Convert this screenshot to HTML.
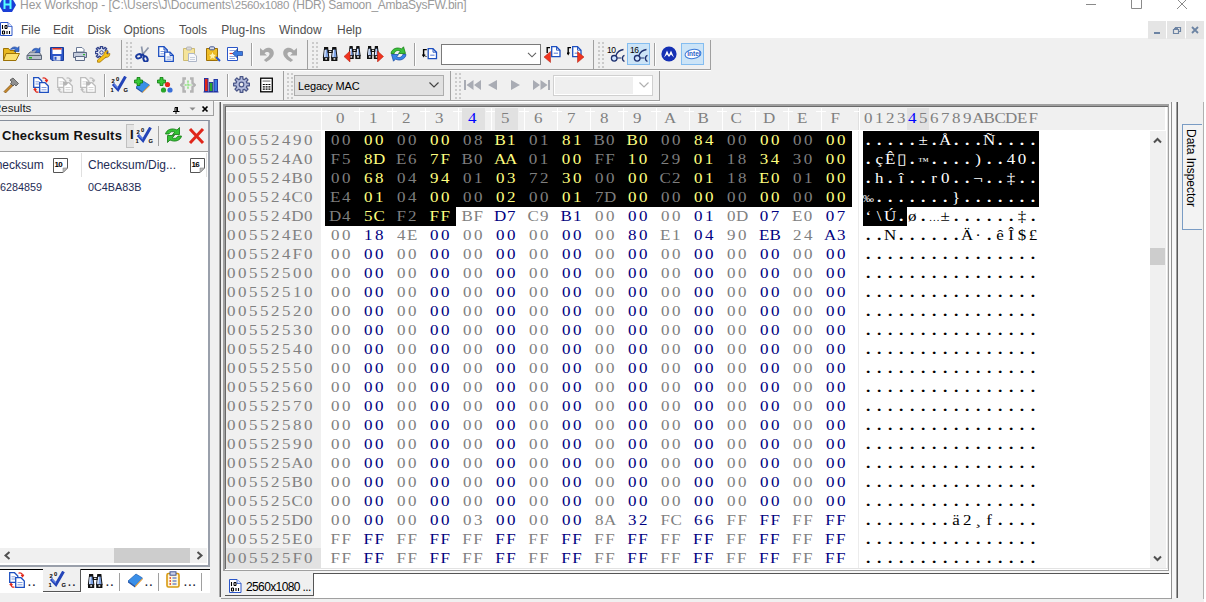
<!DOCTYPE html><html><head><meta charset="utf-8"><title>Hex Workshop</title><style>html,body{margin:0;padding:0}
body{width:1206px;height:602px;position:relative;overflow:hidden;background:#f0f0f0;font-family:"Liberation Sans",sans-serif;font-size:12px;color:#000}
div,svg.a,span.a{position:absolute;box-sizing:border-box}
.t{white-space:pre;line-height:16px}
.title{color:#9a9a9a;font-size:12px;letter-spacing:-0.05px}
.menu{color:#505050;font-size:12px}
.m{font-family:"Liberation Serif",serif;font-size:14.5px;line-height:19px;white-space:pre;letter-spacing:2.1517px;color:#808080;transform:scaleX(1.17);transform-origin:0 0}
.m b{display:inline-flex;justify-content:center;width:9.4017px;margin-left:-1.0759px;margin-right:1.0759px;letter-spacing:0;font-weight:normal}
.m b.d{font-weight:bold;font-size:15px;line-height:10px}
.m b.n{font-size:9.5px}
.m i{font-style:normal;color:#000080}
.s{color:#7f7f7f}
.s i{color:#ffff7f}
.w{color:#fff}
.k{color:#000}
</style></head><body>
<div style="left:0px;top:0px;width:1206px;height:38px;background:#fff;"></div>
<svg class="a" style="left:-1px;top:-5px;" width="18" height="18" viewBox="0 0 18 18"><path d="M4 3H13L17 10L13 17H4L0 10Z" fill="#1b3fd6"/><path d="M5.5 5V14M11.5 5V14M5.5 9.5H11.5" stroke="#5ff" stroke-width="2" fill="none"/></svg>
<div class="t title" style="left:20px;top:-3px;letter-spacing:-0.04px;">Hex Workshop - [C:\Users\J\Documents\</div>
<div class="t title" style="left:234.8px;top:-3px;font-size:11.5px;letter-spacing:-0.3px;">2560x1080</div>
<div class="t title" style="left:292.5px;top:-3px;letter-spacing:-0.26px;">(HDR) Samoon_AmbaSysFW.bin]</div>
<svg class="a" style="left:1080px;top:0" width="126" height="14" viewBox="0 0 126 14"><g stroke="#8a8a8a" stroke-width="1" fill="none"><path d="M6 4.5H16"/><path d="M51.5 -2V8.5H61.5V-2"/><path d="M97 -1L107 9M107 -1L97 9"/></g></svg>
<svg class="a" style="left:0px;top:21px;" width="13" height="16" viewBox="0 0 13 16"><path d="M0.5 1.5H8L12 5.5V14.5H0.5Z" fill="#fff" stroke="#2a55c8"/><path d="M8 1.5V5.5H12" fill="#dde6ff" stroke="#2a55c8" stroke-width=".8"/><path d="M2.5 4V8M5 4.5V7.5M7 4.5V7.5M5 4.5H7M5 7.5H7M2.5 10V13M4.5 10V13M2.5 10H4.5M2.5 13H4.5M7 10V13M9.5 10V13" stroke="#000" stroke-width="1.1" fill="none"/></svg>
<div class="t menu" style="left:21px;top:22px;">File</div>
<div class="t menu" style="left:53px;top:22px;">Edit</div>
<div class="t menu" style="left:87.4px;top:22px;">Disk</div>
<div class="t menu" style="left:123.4px;top:22px;">Options</div>
<div class="t menu" style="left:179px;top:22px;">Tools</div>
<div class="t menu" style="left:221.2px;top:22px;">Plug-Ins</div>
<div class="t menu" style="left:279px;top:22px;">Window</div>
<div class="t menu" style="left:337px;top:22px;">Help</div>
<div style="left:1148px;top:21px;width:18px;height:18px;background:#e5e5e5;"></div>
<div style="left:1167px;top:21px;width:18px;height:18px;background:#e5e5e5;"></div>
<div style="left:1186px;top:21px;width:18px;height:18px;background:#e5e5e5;"></div>
<svg class="a" style="left:1148px;top:21px" width="56" height="18" viewBox="0 0 56 18"><g stroke="#6d84a3" fill="none"><path d="M6 12H12" stroke-width="2"/><path d="M25.5 8.5H30.5V12.5H25.5Z M27.5 8V6.5H32.5V10.5H31" stroke-width="1.2"/><path d="M26 8H30" stroke-width="2"/><path d="M44 6L50 12M50 6L44 12" stroke-width="1.8"/></g></svg>
<svg class="a" style="left:3px;top:46px;" width="17" height="16" viewBox="0 0 17 16"><path d="M0.500 2.500H5.500L7 4.500H12.500V14.500H0.500Z" fill="#e8b820" stroke="#9c7206"/><path d="M3 7.500H16.500L13 14.500H0.500Z" fill="#fbe070" stroke="#9c7206"/><path d="M7.500 3.500C8.500 1 12 0 14.500 2L16 0.500V5.500H11L12.800 3.700C11.500 2.700 9.500 2.800 7.500 3.500Z" fill="#3a6fd0" stroke="#1d3f96" stroke-width=".600"/></svg>
<svg class="a" style="left:26px;top:46px;" width="16" height="16" viewBox="0 0 16 16"><path d="M1 9.5L4 6H13L15.5 9.5V13.5H1Z" fill="#b9c0cc" stroke="#5d6778"/><path d="M1 9.5H15.5" stroke="#5d6778"/><rect x="3" y="11" width="3" height="1.5" fill="#2db52d"/><path d="M6 5C7 2.5 10 1.5 12.5 3L14 1.5V6.5H9L10.8 4.7C9.5 4 8 4.2 6 5Z" fill="#3a6fd0" stroke="#1d3f96" stroke-width=".6"/></svg>
<svg class="a" style="left:49px;top:46px;" width="16" height="16" viewBox="0 0 16 16"><path d="M1.5 1.5H14.5V14.5H3L1.5 13Z" fill="#2a55c8" stroke="#173a9a"/><rect x="3.5" y="2" width="9" height="6" fill="#fff"/><rect x="3.5" y="2" width="9" height="1.6" fill="#e03a2a"/><rect x="4.5" y="10" width="7" height="4.5" fill="#dfe6f5"/><rect x="5.5" y="10.8" width="2" height="3" fill="#2a55c8"/></svg>
<svg class="a" style="left:72px;top:46px;" width="16" height="16" viewBox="0 0 16 16"><path d="M4.5 6V1.5H10L12 3.5V6Z" fill="#fff" stroke="#6b7a96"/><path d="M1.5 6.5H14.5V11.5H1.5Z" fill="#c3cbdb" stroke="#5d6a86"/><path d="M3.5 10.5H12.5V14.5H3.5Z" fill="#eef1f7" stroke="#5d6a86"/><rect x="11" y="8" width="2" height="1.2" fill="#2db52d"/></svg>
<svg class="a" style="left:95px;top:46px;" width="16" height="17" viewBox="0 0 16 17"><path d="M10.66 5.40L12.71 5.47L12.71 7.53L10.66 7.60L10.22 8.66L11.63 10.16L10.16 11.63L8.66 10.22L7.60 10.66L7.53 12.71L5.47 12.71L5.40 10.66L4.34 10.22L2.84 11.63L1.37 10.16L2.78 8.66L2.34 7.60L0.29 7.53L0.29 5.47L2.34 5.40L2.78 4.34L1.37 2.84L2.84 1.37L4.34 2.78L5.40 2.34L5.47 0.29L7.53 0.29L7.60 2.34L8.66 2.78L10.16 1.37L11.63 2.84L10.22 4.34Z" fill="#e4e9f6" stroke="#34448c" stroke-width="1.400" stroke-linejoin="round"/><circle cx="6.500" cy="6.500" r="1.700" fill="#f0f0f0" stroke="#34448c" stroke-width="1"/><path d="M2.500 14L9 8.500C8.600 6.200 10.500 4.400 13 4.800L11.200 6.800L12.300 8.200L14.800 7.400C15.200 10 13 11.800 10.800 11.200L5 16.200H2.500Z" fill="#f6c21a" stroke="#a8780a" stroke-width=".800"/></svg>
<div style="left:0px;top:69px;width:122px;height:1px;background:#a0a0a0;"></div>
<div style="left:0px;top:70px;width:122px;height:1px;background:#fff;"></div>
<div style="left:121px;top:40px;width:1px;height:29px;background:#a0a0a0;"></div>
<div style="left:126px;top:42px;width:7px;height:26px;background-image:radial-gradient(circle at 1px 1px,#cbcbcb 0.8px,transparent 1.1px);background-size:4px 4px;"></div>
<svg class="a" style="left:135px;top:46px;" width="16" height="16" viewBox="0 0 16 16"><path d="M6.500 0.500L8 9M13.500 1.500L6 10.500" stroke="#8d97ab" stroke-width="1.700" fill="none"/><ellipse cx="3.800" cy="10.300" rx="2.700" ry="2" fill="none" stroke="#1a3a9e" stroke-width="2" transform="rotate(-20 3.800 10.300)"/><ellipse cx="10.500" cy="13" rx="2" ry="2.700" fill="none" stroke="#1a3a9e" stroke-width="2" transform="rotate(-20 10.500 13)"/><path d="M5.500 9L8 8.500L9.500 10.500" stroke="#1a3a9e" stroke-width="2" fill="none"/></svg>
<svg class="a" style="left:158px;top:46px;" width="16" height="16" viewBox="0 0 16 16"><path d="M0.700 0.700H6L9.300 4V10.300H0.700Z" fill="#fff" stroke="#1d4fc0" stroke-width="1.300"/><path d="M6 0.700V4H9.300" fill="none" stroke="#1d4fc0" stroke-width="1"/><path d="M2.500 5.500H7.500M2.500 7.800H7.500" stroke="#7f9ce0" stroke-width="1"/><path d="M6.700 6.200H12L15.300 9.500V15.300H6.700Z" fill="#fff" stroke="#1d4fc0" stroke-width="1.300"/><path d="M12 6.200V9.500H15.300" fill="none" stroke="#1d4fc0" stroke-width="1"/><path d="M8.500 11H13.500M8.500 13.200H13.500" stroke="#7f9ce0" stroke-width="1"/></svg>
<svg class="a" style="left:182px;top:46px;" width="16" height="16" viewBox="0 0 16 16"><path d="M1.5 2.5H12.5V14.5H1.5Z" fill="#f5e49a" stroke="#cdbb72"/><rect x="4.5" y="1" width="5" height="3" rx="1" fill="#d9d9d9" stroke="#a9a9a9" stroke-width=".8"/><path d="M6.5 7.5H12L14.5 10V15.5H6.5Z" fill="#f7f8fb" stroke="#aeb7c8"/><path d="M8 11.5H13M8 13.5H13" stroke="#c2c9d8" stroke-width=".9"/></svg>
<svg class="a" style="left:205px;top:46px;" width="16" height="16" viewBox="0 0 16 16"><path d="M1.5 2.5H12.5V14.5H1.5Z" fill="#f0bf28" stroke="#9c6f07"/><rect x="4.5" y="0.8" width="5" height="3" rx="1" fill="#d6dbe6" stroke="#34498a" stroke-width=".9"/><path d="M7.5 5L8.8 8.2L12 8.5L9.6 10.6L10.4 14L7.5 12.2L4.6 14L5.4 10.6L3 8.5L6.2 8.2Z" fill="#fff3b0" stroke="#e0a400" stroke-width=".6"/><path d="M11 11L15 15" stroke="#2a55c8" stroke-width="2"/></svg>
<svg class="a" style="left:227px;top:46px;" width="16" height="16" viewBox="0 0 16 16"><path d="M0.5 1.5H10.5V14.5H0.5Z" fill="#fff" stroke="#2a55c8"/><path d="M2.5 4.5H8M2.5 10.5H8M2.5 12.5H8" stroke="#7f9ce0" stroke-width=".9"/><path d="M2.5 7.5H6" stroke="#e03a2a" stroke-width="1.2"/><path d="M15.5 5.5V9.5H10.5V12L5.5 7.5L10.5 3V5.5Z" fill="#3a7be0" stroke="#1d3f96" stroke-width=".7"/></svg>
<div style="left:251px;top:43px;width:1px;height:23px;background:#a0a0a0;"></div>
<div style="left:252px;top:43px;width:1px;height:23px;background:#fff;"></div>
<svg class="a" style="left:259px;top:46px;" width="16" height="16" viewBox="0 0 16 16"><path d="M1 2V9.500H8L5.500 7.300C7 5.600 10 5.600 10.500 7.600C11 9.600 8 12 4.800 14L7.300 16C11 13.600 14.800 11 14.800 7C14.800 2.800 10 0.800 6.500 2.400C5.500 2.900 4.600 3.600 4 4.400Z" fill="#a8a8a8"/></svg>
<svg class="a" style="left:282px;top:46px;" width="16" height="16" viewBox="0 0 16 16"><path d="M15 2V9.500H8L10.500 7.300C9 5.600 6 5.600 5.500 7.600C5 9.600 8 12 11.200 14L8.700 16C5 13.600 1.200 11 1.200 7C1.200 2.800 6 0.800 9.500 2.400C10.500 2.900 11.400 3.600 12 4.400Z" fill="#a8a8a8"/></svg>
<div style="left:122px;top:69px;width:186px;height:1px;background:#a0a0a0;"></div>
<div style="left:122px;top:70px;width:186px;height:1px;background:#fff;"></div>
<div style="left:307px;top:40px;width:1px;height:29px;background:#a0a0a0;"></div>
<div style="left:312px;top:42px;width:7px;height:26px;background-image:radial-gradient(circle at 1px 1px,#cbcbcb 0.8px,transparent 1.1px);background-size:4px 4px;"></div>
<svg class="a" style="left:322px;top:46px;" width="16" height="16" viewBox="0 0 16 16"><path d="M2.5 2.5H5.7L6.9 12H1.3Z" fill="#7fa4e6" stroke="#111" stroke-width="1"/><path d="M3.2 4L2.8 11" stroke="#e8f1ff" stroke-width="1.2"/><rect x="2.0" y="1" width="4.2" height="2.6" fill="#111"/><rect x="1.0" y="11.4" width="6.2" height="3.6" fill="#111"/><rect x="3.3" y="12.2" width="1.8" height="1.4" fill="#fff"/><path d="M10.7 2.5H13.899999999999999L15.099999999999998 12H9.5Z" fill="#7fa4e6" stroke="#111" stroke-width="1"/><path d="M11.399999999999999 4L11.0 11" stroke="#e8f1ff" stroke-width="1.2"/><rect x="10.2" y="1" width="4.2" height="2.6" fill="#111"/><rect x="9.2" y="11.4" width="6.2" height="3.6" fill="#111"/><rect x="11.499999999999998" y="12.2" width="1.8" height="1.4" fill="#fff"/><rect x="5.7" y="4" width="5" height="3" fill="#111"/><rect x="7.0" y="4.8" width="2.4" height="1.2" fill="#ddd"/></svg>
<svg class="a" style="left:344px;top:46px;" width="17" height="16" viewBox="0 0 17 16"><path d="M6.0 1.5H8.2L9.399999999999999 10H4.8Z" fill="#7fa4e6" stroke="#111" stroke-width="1"/><path d="M6.7 3L6.3 9" stroke="#e8f1ff" stroke-width="1.2"/><rect x="5.5" y="0" width="3.2" height="2.6" fill="#111"/><rect x="4.5" y="9.4" width="5.2" height="3.6" fill="#111"/><rect x="6.3" y="10.2" width="1.8" height="1.4" fill="#fff"/><path d="M12.8 1.5H15.0L16.2 10H11.600000000000001Z" fill="#7fa4e6" stroke="#111" stroke-width="1"/><path d="M13.5 3L13.100000000000001 9" stroke="#e8f1ff" stroke-width="1.2"/><rect x="12.3" y="0" width="3.2" height="2.6" fill="#111"/><rect x="11.3" y="9.4" width="5.2" height="3.6" fill="#111"/><rect x="13.1" y="10.2" width="1.8" height="1.4" fill="#fff"/><rect x="8.2" y="3" width="4.6" height="3" fill="#111"/><rect x="9.5" y="3.8" width="2.0" height="1.2" fill="#ddd"/><path d="M0 10.5L6 5V16Z" fill="#f0341f" stroke="#b01a0a" stroke-width=".5"/></svg>
<svg class="a" style="left:367px;top:46px;" width="17" height="16" viewBox="0 0 17 16"><path d="M1.5 1.5H3.7L4.9 10H0.3Z" fill="#7fa4e6" stroke="#111" stroke-width="1"/><path d="M2.2 3L1.8 9" stroke="#e8f1ff" stroke-width="1.2"/><rect x="1.0" y="0" width="3.2" height="2.6" fill="#111"/><rect x="0.0" y="9.4" width="5.2" height="3.6" fill="#111"/><rect x="1.8" y="10.2" width="1.8" height="1.4" fill="#fff"/><path d="M8.3 1.5H10.5L11.7 10H7.1000000000000005Z" fill="#7fa4e6" stroke="#111" stroke-width="1"/><path d="M9.0 3L8.600000000000001 9" stroke="#e8f1ff" stroke-width="1.2"/><rect x="7.800000000000001" y="0" width="3.2" height="2.6" fill="#111"/><rect x="6.800000000000001" y="9.4" width="5.2" height="3.6" fill="#111"/><rect x="8.6" y="10.2" width="1.8" height="1.4" fill="#fff"/><rect x="3.7" y="3" width="4.6" height="3" fill="#111"/><rect x="5.0" y="3.8" width="2.0" height="1.2" fill="#ddd"/><path d="M16.5 10.500L10.5 5V16Z" fill="#f0341f" stroke="#b01a0a" stroke-width=".5"/></svg>
<svg class="a" style="left:390px;top:46px;" width="17" height="16" viewBox="0 0 17 16"><path d="M1 7.500C1.500 3 7 0.5 11.500 3L13.500 0.800L15.500 7.500H8.500L10.300 5.200C8 3.800 5 4.500 4.200 7.500Z" fill="#3cc23c" stroke="#168016" stroke-width=".8"/><path d="M16 8.500C15.500 13 10 15.500 5.500 13L3.500 15.200L1.500 8.500H8.500L6.700 10.800C9 12.200 12 11.500 12.800 8.500Z" fill="#3a86e8" stroke="#1d4fa8" stroke-width=".8"/></svg>
<div style="left:414px;top:43px;width:1px;height:23px;background:#a0a0a0;"></div>
<div style="left:415px;top:43px;width:1px;height:23px;background:#fff;"></div>
<svg class="a" style="left:422px;top:46px;" width="16" height="16" viewBox="0 0 16 16"><path d="M6.2 2.7H11.0L14.5 6.2V12.7H6.2Z" fill="#fff" stroke="#1d4fc0" stroke-width="1.300"/><path d="M11.0 2.7V6.2H14.5" fill="none" stroke="#1d4fc0" stroke-width=".900"/><path d="M8.2 9.2H12.5" stroke="#6f90e0" stroke-width="1.200"/><path d="M4.800 3.600H1.600V10" stroke="#000" stroke-width="1.400" fill="none"/><path d="M-0.300 8.500L1.600 11.500L3.500 8.500Z" fill="#000"/><path d="M3 9.500L4.500 11" stroke="#000" stroke-width="1"/></svg>
<div style="left:441px;top:44px;width:100px;height:21px;background:#fff;border:1px solid #7a7a7a;"></div>
<svg class="a" style="left:526px;top:51px" width="12" height="8" viewBox="0 0 12 8"><path d="M2 1.800L6 5.800L10 1.800" stroke="#606060" stroke-width="1.100" fill="none"/></svg>
<svg class="a" style="left:544px;top:46px;" width="17" height="17" viewBox="0 0 17 17"><path d="M7.7 0.7H12.5L16.0 4.2V10.7H7.7Z" fill="#fff" stroke="#1d4fc0" stroke-width="1.300"/><path d="M12.5 0.7V4.2H16.0" fill="none" stroke="#1d4fc0" stroke-width=".900"/><path d="M9.7 7.199999999999999H14.0" stroke="#6f90e0" stroke-width="1.200"/><path d="M6 1.600H3.200V7" stroke="#000" stroke-width="1.400" fill="none"/><path d="M0 11L6.500 5.500V16.500Z" fill="#f0341f" stroke="#b01a0a" stroke-width=".500"/></svg>
<svg class="a" style="left:566.5px;top:46px;" width="18" height="17" viewBox="0 0 18 17"><path d="M5.7 0.7H10.5L14.0 4.2V10.7H5.7Z" fill="#fff" stroke="#1d4fc0" stroke-width="1.300"/><path d="M10.5 0.7V4.2H14.0" fill="none" stroke="#1d4fc0" stroke-width=".900"/><path d="M7.7 7.199999999999999H12.0" stroke="#6f90e0" stroke-width="1.200"/><path d="M4 1.600H1.200V8" stroke="#000" stroke-width="1.400" fill="none"/><path d="M-0.500 6.500L1.200 9.500L3 6.500Z" fill="#000"/><path d="M17 11L10.500 5.500V16.500Z" fill="#f0341f" stroke="#b01a0a" stroke-width=".500"/></svg>
<div style="left:308px;top:69px;width:286px;height:1px;background:#a0a0a0;"></div>
<div style="left:308px;top:70px;width:286px;height:1px;background:#fff;"></div>
<div style="left:593px;top:40px;width:1px;height:29px;background:#a0a0a0;"></div>
<div style="left:598px;top:42px;width:7px;height:26px;background-image:radial-gradient(circle at 1px 1px,#cbcbcb 0.8px,transparent 1.1px);background-size:4px 4px;"></div>
<svg class="a" style="left:607px;top:45px;" width="18" height="18" viewBox="0 0 18 18"><text x="0" y="7.500" font-family="Liberation Sans,sans-serif" font-size="8.500" fill="#000" letter-spacing="-0.600">10</text><circle cx="7.200" cy="13.300" r="2.800" fill="#cfe4ff" stroke="#1d2f6e" stroke-width="1.300"/><path d="M8.800 10.800C10 7.500 13 5 16.500 4.500M17.500 10.300C14.800 10.800 14.800 15.800 17.500 16.300" stroke="#1d2f6e" stroke-width="1.300" fill="none"/><path d="M10 13H14.500" stroke="#1d2f6e" stroke-width="1"/></svg>
<div style="left:627px;top:43px;width:23px;height:22px;background:#cce4f7;border:1px solid #84bdf0;"></div>
<svg class="a" style="left:630px;top:45px;" width="18" height="18" viewBox="0 0 18 18"><text x="0" y="7.500" font-family="Liberation Sans,sans-serif" font-size="8.500" fill="#000" letter-spacing="-0.600">16</text><circle cx="7.200" cy="13.300" r="2.800" fill="#cfe4ff" stroke="#1d2f6e" stroke-width="1.300"/><path d="M8.800 10.800C10 7.500 13 5 16.500 4.500M17.500 10.300C14.800 10.800 14.800 15.800 17.500 16.300" stroke="#1d2f6e" stroke-width="1.300" fill="none"/><path d="M10 13H14.500" stroke="#1d2f6e" stroke-width="1"/></svg>
<div style="left:654px;top:43px;width:1px;height:23px;background:#a0a0a0;"></div>
<div style="left:655px;top:43px;width:1px;height:23px;background:#fff;"></div>
<svg class="a" style="left:661px;top:46px;" width="16" height="16" viewBox="0 0 16 16"><circle cx="8" cy="8" r="7.6" fill="#1530b4"/><path d="M3 11.5L6 4.5L8 9L10 4.5L13 11.5L10 8.5L8 11L6 8.5Z" fill="#fff"/></svg>
<div style="left:681px;top:43px;width:23px;height:22px;background:#cce4f7;border:1px solid #84bdf0;"></div>
<svg class="a" style="left:684px;top:46px;" width="18" height="16" viewBox="0 0 18 16"><ellipse cx="9" cy="8" rx="8" ry="4.6" fill="#fff" stroke="#3a78d8" stroke-width="1" transform="rotate(-8 9 8)"/><text x="3.2" y="10.3" font-family="Liberation Sans,sans-serif" font-size="6.5" fill="#2a60c8" font-weight="bold">intel</text></svg>
<div style="left:594px;top:69px;width:117px;height:1px;background:#a0a0a0;"></div>
<div style="left:594px;top:70px;width:117px;height:1px;background:#fff;"></div>
<div style="left:710px;top:40px;width:1px;height:29px;background:#a0a0a0;"></div>
<svg class="a" style="left:3px;top:77px;" width="16" height="16" viewBox="0 0 16 16"><path d="M1 14.5L9 6.5L10.5 8L2.5 16Z" fill="#c98a2c" stroke="#7a4a0a" stroke-width=".7"/><path d="M7 3L10 1L15.5 6.5L13 9L11.5 7.5L10 9L7.5 6.5L9 5Z" fill="#8f8f8f" stroke="#444" stroke-width=".7"/></svg>
<div style="left:27px;top:74px;width:1px;height:23px;background:#a0a0a0;"></div>
<div style="left:28px;top:74px;width:1px;height:23px;background:#fff;"></div>
<svg class="a" style="left:33px;top:77px;" width="16" height="16" viewBox="0 0 16 16"><path d="M0.700 0.700H5.500L8.800 4V10.300H0.700Z" fill="#fff" stroke="#1d4fc0" stroke-width="1.300"/><path d="M2.500 4.800H6.500M2.500 7H6.500" stroke="#7f9ce0" stroke-width="1"/><path d="M6.700 5.700H12L15.300 9V15.300H6.700Z" fill="#fff" stroke="#1d4fc0" stroke-width="1.300"/><path d="M8.500 10.500H13.500M8.500 12.800H13.500" stroke="#7f9ce0" stroke-width="1"/><path d="M9.500 1.200C11.500 0.400 13.500 1.500 13.500 3.500M12.200 2.800L13.600 4.600L14.800 2.600M5.500 15C3.500 15.600 2 14.500 2 12.500M0.800 13.200L2 11.500L3.500 13.200" stroke="#e0261a" stroke-width="1.200" fill="none"/></svg>
<svg class="a" style="left:57px;top:77px;" width="16" height="16" viewBox="0 0 16 16"><path d="M0.700 0.700H5.500L8.800 4V10.300H0.700Z" fill="#fff" stroke="#bdbdbd" stroke-width="1.300"/><path d="M2.500 4.800H6.500M2.500 7H6.500" stroke="#d4d4d4" stroke-width="1"/><path d="M6.700 5.700H12L15.300 9V15.300H6.700Z" fill="#fff" stroke="#bdbdbd" stroke-width="1.300"/><path d="M8.500 10.500H13.500M8.500 12.800H13.500" stroke="#d4d4d4" stroke-width="1"/><path d="M9.500 1.200C11.500 0.400 13.500 1.500 13.500 3.500M12.200 2.800L13.600 4.600L14.800 2.600M5.500 15C3.500 15.600 2 14.500 2 12.500M0.800 13.200L2 11.500L3.500 13.200" stroke="#bdbdbd" stroke-width="1.200" fill="none"/><path d="M6 4.500L9 4.500L11 6.500L9 8.500H6.700Z" fill="#b4b4b4"/></svg>
<svg class="a" style="left:80px;top:77px;" width="16" height="16" viewBox="0 0 16 16"><path d="M0.700 0.700H5.500L8.800 4V10.300H0.700Z" fill="#fff" stroke="#bdbdbd" stroke-width="1.300"/><path d="M2.500 4.800H6.500M2.500 7H6.500" stroke="#d4d4d4" stroke-width="1"/><path d="M6.700 5.700H12L15.300 9V15.300H6.700Z" fill="#fff" stroke="#bdbdbd" stroke-width="1.300"/><path d="M8.500 10.500H13.500M8.500 12.800H13.500" stroke="#d4d4d4" stroke-width="1"/><path d="M9.500 1.200C11.500 0.400 13.500 1.500 13.500 3.500M12.200 2.800L13.600 4.600L14.800 2.600M5.500 15C3.500 15.600 2 14.500 2 12.500M0.800 13.200L2 11.500L3.500 13.200" stroke="#bdbdbd" stroke-width="1.200" fill="none"/><path d="M6 4.500L9 4.500L11 6.500L9 8.500H6.700Z" fill="#b4b4b4"/></svg>
<div style="left:104px;top:74px;width:1px;height:23px;background:#a0a0a0;"></div>
<div style="left:105px;top:74px;width:1px;height:23px;background:#fff;"></div>
<svg class="a" style="left:110px;top:76px;" width="19" height="17" viewBox="0 0 19 17"><path d="M3 8L8 13.500L15.500 0.500" stroke="#2444b8" stroke-width="3" fill="none" stroke-linejoin="miter"/><path d="M4 8.500L7.800 12" stroke="#5f83e8" stroke-width="1.200"/><text x="1.500" y="6.500" font-family="Liberation Sans,sans-serif" font-size="5.800" font-weight="bold" fill="#000">2</text><text x="6" y="4.500" font-family="Liberation Sans,sans-serif" font-size="5.800" font-weight="bold" fill="#000">0</text><text x="0.500" y="16" font-family="Liberation Sans,sans-serif" font-size="5.800" font-weight="bold" fill="#000">1</text><text x="13.500" y="16" font-family="Liberation Sans,sans-serif" font-size="5.800" font-weight="bold" fill="#000">G</text></svg>
<svg class="a" style="left:134px;top:77px;" width="16" height="16" viewBox="0 0 16 16"><path d="M2 10L9 4L15.5 8L8.5 15Z" fill="#3a8fe8" stroke="#1d5fb0" stroke-width=".7"/><path d="M2 10L8.5 15L8.5 16L2 11.5Z" fill="#1d4fa8"/><path d="M8.5 15L15.5 8V9.3L8.5 16Z" fill="#e8a03a"/><path d="M3 0.5H6V3H8.5V6H6V8.5H3V6H0.5V3H3Z" fill="#38c838" stroke="#0d7a0d" stroke-width=".8"/></svg>
<svg class="a" style="left:157px;top:77px;" width="16" height="16" viewBox="0 0 16 16"><path d="M3 0.5H6V3H8.5V6H6V8.5H3V6H0.5V3H3Z" fill="#38c838" stroke="#0d7a0d" stroke-width=".8"/><circle cx="10.5" cy="7.5" r="2.6" fill="#e8291c"/><circle cx="6.5" cy="13" r="2.6" fill="#2aa52a"/><circle cx="13" cy="13" r="2.6" fill="#3a6fd8"/></svg>
<svg class="a" style="left:180px;top:77px;" width="16" height="16" viewBox="0 0 16 16"><path d="M6 1.500H3.500V6L1.200 8L3.500 10V14.500H6M10 1.500H12.500V6L14.800 8L12.500 10V14.500H10" stroke="#b4b4b4" stroke-width="2.400" fill="none"/><path d="M8 3.500V12.500M4.500 8H11.500" stroke="#8fe07f" stroke-width="1.500" stroke-dasharray="2.200 0.800"/></svg>
<svg class="a" style="left:203px;top:77px;" width="16" height="16" viewBox="0 0 16 16"><rect x="1.5" y="1.5" width="3.5" height="13" fill="#e0261a" stroke="#1d2f9e" stroke-width=".9"/><rect x="6.3" y="5.5" width="3.5" height="9" fill="#2aa52a" stroke="#1d2f9e" stroke-width=".9"/><rect x="11" y="2.5" width="3.5" height="12" fill="#3a7be0" stroke="#1d2f9e" stroke-width=".9"/><path d="M0.5 15H15.5" stroke="#1d2f9e"/></svg>
<div style="left:227px;top:74px;width:1px;height:23px;background:#a0a0a0;"></div>
<div style="left:228px;top:74px;width:1px;height:23px;background:#fff;"></div>
<svg class="a" style="left:233px;top:76px;" width="17" height="17" viewBox="0 0 17 17"><path d="M13.91 7.06L16.39 7.19L16.39 9.81L13.91 9.94L13.34 11.31L15.01 13.15L13.15 15.01L11.31 13.34L9.94 13.91L9.81 16.39L7.19 16.39L7.06 13.91L5.69 13.34L3.85 15.01L1.99 13.15L3.66 11.31L3.09 9.94L0.61 9.81L0.61 7.19L3.09 7.06L3.66 5.69L1.99 3.85L3.85 1.99L5.69 3.66L7.06 3.09L7.19 0.61L9.81 0.61L9.94 3.09L11.31 3.66L13.15 1.99L15.01 3.85L13.34 5.69Z" fill="#b4bcdc" stroke="#4a5688" stroke-width="1.300" stroke-linejoin="round"/><circle cx="8.500" cy="8.500" r="2.300" fill="#f0f0f0" stroke="#4a5688" stroke-width="1.200"/></svg>
<svg class="a" style="left:259.5px;top:77px;" width="13" height="16" viewBox="0 0 13 16"><rect x="0.700" y="1.200" width="11.600" height="13.600" fill="#fff" stroke="#000" stroke-width="1.300"/><rect x="2.600" y="3.200" width="7.800" height="1.800" fill="#aaa"/><path d="M2.800 7.500H10.400M2.800 9.800H10.400M2.800 12.100H10.400" stroke="#000" stroke-width="1.200" stroke-dasharray="2 0.800"/></svg>
<div style="left:0px;top:100px;width:284px;height:1px;background:#a0a0a0;"></div>
<div style="left:0px;top:101px;width:284px;height:1px;background:#fff;"></div>
<div style="left:283px;top:71px;width:1px;height:29px;background:#a0a0a0;"></div>
<div style="left:287px;top:73px;width:7px;height:26px;background-image:radial-gradient(circle at 1px 1px,#cbcbcb 0.8px,transparent 1.1px);background-size:4px 4px;"></div>
<div style="left:294px;top:75px;width:150px;height:21px;background:#e1e1e1;border:1px solid #adadad;"></div>
<div class="t " style="left:298px;top:78px;font-size:11px;letter-spacing:-0.15px;color:#000;">Legacy MAC</div>
<svg class="a" style="left:428px;top:81px" width="12" height="8" viewBox="0 0 12 8"><path d="M1.5 1.5L6 6L10.5 1.5" stroke="#444" stroke-width="1.2" fill="none"/></svg>
<div style="left:284px;top:100px;width:167px;height:1px;background:#a0a0a0;"></div>
<div style="left:284px;top:101px;width:167px;height:1px;background:#fff;"></div>
<div style="left:450px;top:71px;width:1px;height:29px;background:#a0a0a0;"></div>
<div style="left:455px;top:73px;width:7px;height:26px;background-image:radial-gradient(circle at 1px 1px,#cbcbcb 0.8px,transparent 1.1px);background-size:4px 4px;"></div>
<svg class="a" style="left:464px;top:79px;" width="18" height="12" viewBox="0 0 18 12"><path d="M1 1V11" stroke="#a9acb4" stroke-width="2"/><path d="M9.5 1V11L2.5 6Z M17 1V11L10 6Z" fill="#a9acb4"/></svg>
<svg class="a" style="left:487px;top:79px;" width="11" height="12" viewBox="0 0 11 12"><path d="M10 1V11L1 6Z" fill="#a9acb4"/></svg>
<svg class="a" style="left:510px;top:79px;" width="11" height="12" viewBox="0 0 11 12"><path d="M1 1V11L10 6Z" fill="#a9acb4"/></svg>
<svg class="a" style="left:532px;top:79px;" width="18" height="12" viewBox="0 0 18 12"><path d="M17 1V11" stroke="#a9acb4" stroke-width="2"/><path d="M8.5 1V11L15.5 6Z M1 1V11L8 6Z" fill="#a9acb4"/></svg>
<div style="left:553px;top:75px;width:100px;height:21px;background:#fff;border:1px solid #d0d0d0;"></div>
<div style="left:555px;top:77px;width:78px;height:17px;background:#efefef;"></div>
<svg class="a" style="left:638px;top:81px" width="12" height="8" viewBox="0 0 12 8"><path d="M1.5 1.5L6 6L10.5 1.5" stroke="#b0b0b0" stroke-width="1.2" fill="none"/></svg>
<div style="left:451px;top:100px;width:209px;height:1px;background:#a0a0a0;"></div>
<div style="left:451px;top:101px;width:209px;height:1px;background:#fff;"></div>
<div style="left:659px;top:71px;width:1px;height:29px;background:#a0a0a0;"></div>
<div style="left:0px;top:101px;width:214px;height:15px;background:#f0f0f0;border-bottom:1px solid #a0a0a0;border-right:1px solid #a0a0a0;"></div>
<div class="t " style="left:-7px;top:101px;font-size:11.5px;line-height:14px;color:#1a1a1a;">Results</div>
<svg class="a" style="left:168px;top:103px" width="42" height="12" viewBox="0 0 42 12"><g stroke="#000" fill="none"><path d="M7 4.500V8M9.500 4.500V8M5 8.500H11.500M8 9V11" stroke-width="1"/><path d="M7 4.500H10" stroke-width="1"/><path d="M9 4.500V8" stroke-width="1.500"/></g><path d="M21.500 4.500H27.500L24.500 7.500Z" fill="#8a8a8a"/><path d="M34.500 3.500L39.500 8.500M39.500 3.500L34.500 8.500" stroke="#000" stroke-width="1.700"/></svg>
<div style="left:0px;top:120px;width:210px;height:447px;background:#fff;border-top:1px solid #868e9c;border-right:2px solid #9aa0ab;border-bottom:2px solid #9aa0ab;"></div>
<div style="left:0px;top:121px;width:208px;height:31px;background:#f0f0f0;border-bottom:1px solid #a0a0a0;"></div>
<div class="t " style="left:2px;top:128px;font-weight:bold;font-size:13px;letter-spacing:0.24px;color:#111;">Checksum Results</div>
<div style="left:126px;top:124px;width:8px;height:24px;background:#e4e4e4;border-left:1px solid #c0c0c0;border-top:1px solid #c0c0c0;border-bottom:1px solid #c0c0c0;"></div>
<div class="t " style="left:130px;top:127px;font-weight:bold;font-size:13px;color:#111;width:4px;overflow:hidden;">I</div>
<svg class="a" style="left:135px;top:127px;" width="19" height="17" viewBox="0 0 19 17"><path d="M3 8L8 13.500L15.500 0.500" stroke="#2444b8" stroke-width="3" fill="none" stroke-linejoin="miter"/><path d="M4 8.500L7.800 12" stroke="#5f83e8" stroke-width="1.200"/><text x="1.500" y="6.500" font-family="Liberation Sans,sans-serif" font-size="5.800" font-weight="bold" fill="#000">2</text><text x="6" y="4.500" font-family="Liberation Sans,sans-serif" font-size="5.800" font-weight="bold" fill="#000">0</text><text x="0.500" y="16" font-family="Liberation Sans,sans-serif" font-size="5.800" font-weight="bold" fill="#000">1</text><text x="13.500" y="16" font-family="Liberation Sans,sans-serif" font-size="5.800" font-weight="bold" fill="#000">G</text></svg>
<div style="left:158px;top:126px;width:1px;height:20px;background:#a0a0a0;"></div>
<svg class="a" style="left:164px;top:126px;" width="19" height="18" viewBox="0 0 19 18"><path d="M1.500 8C2.500 3.500 8 1.500 13 4L15.500 1.500V8.500H8.500L10.800 6.300C8.800 5 6 5.500 5 8Z" fill="#35c235" stroke="#127812" stroke-width=".800"/><path d="M17.500 10C16.500 14.500 11 16.500 6 14L3.500 16.500V9.500H10.500L8.200 11.700C10.200 13 13 12.500 14 10Z" fill="#35c235" stroke="#127812" stroke-width=".800"/></svg>
<svg class="a" style="left:188px;top:127px;" width="17" height="18" viewBox="0 0 17 18"><path d="M2 2L15 16M15 2L2 16" stroke="#e0261a" stroke-width="3" fill="none"/></svg>
<div style="left:81px;top:153px;width:1px;height:24px;background:#e0e0e0;"></div>
<div class="t " style="left:-13px;top:157px;font-size:12px;color:#1e2c55;">Checksum</div>
<svg class="a" style="left:53px;top:158px;" width="15" height="15" viewBox="0 0 15 15"><path d="M0.5 0.5H14.5V10L10 14.5H0.5Z" fill="#fff" stroke="#555"/><path d="M14.5 10H10V14.5Z" fill="#bbb" stroke="#888" stroke-width=".6"/><text x="1.5" y="8.5" font-family="Liberation Sans,sans-serif" font-size="8" font-weight="bold" fill="#000" letter-spacing="-0.6">10</text></svg>
<div class="t " style="left:88px;top:157px;font-size:12px;color:#1e2c55;">Checksum/Dig...</div>
<svg class="a" style="left:190px;top:158px;" width="15" height="15" viewBox="0 0 15 15"><path d="M0.5 0.5H14.5V10L10 14.5H0.5Z" fill="#fff" stroke="#555"/><path d="M14.5 10H10V14.5Z" fill="#bbb" stroke="#888" stroke-width=".6"/><text x="1.5" y="8.5" font-family="Liberation Sans,sans-serif" font-size="8" font-weight="bold" fill="#000" letter-spacing="-0.6">16</text></svg>
<div style="left:206px;top:153px;width:1px;height:24px;background:#e0e0e0;"></div>
<div class="t " style="left:-6px;top:179px;font-size:10.8px;color:#1e2c55;">06284859</div>
<div class="t " style="left:88px;top:179px;font-size:10.8px;color:#1e2c55;">0C4BA83B</div>
<div style="left:0px;top:548px;width:207px;height:15px;background:#f0f0f0;"></div>
<div style="left:114px;top:548px;width:76px;height:15px;background:#cdcdcd;"></div>
<svg class="a" style="left:0;top:548px" width="207" height="15" viewBox="0 0 207 15"><path d="M9.500 4L5.500 7.500L9.500 11M197.500 4L201.500 7.500L197.500 11" stroke="#505050" stroke-width="2" fill="none"/></svg>
<div style="left:0px;top:569px;width:210px;height:24px;background:#fff;"></div>
<div style="left:0px;top:569px;width:43px;height:1px;background:#000;"></div>
<div style="left:81px;top:569px;width:129px;height:1px;background:#000;"></div>
<div style="left:43px;top:569px;width:38px;height:23px;background:#f0f0f0;border-right:1px solid #555;border-bottom:1px solid #555;"></div>
<svg class="a" style="left:9px;top:572px;" width="16" height="16" viewBox="0 0 16 16"><path d="M0.700 0.700H5.500L8.800 4V10.300H0.700Z" fill="#fff" stroke="#1d4fc0" stroke-width="1.300"/><path d="M2.500 4.800H6.500M2.500 7H6.500" stroke="#7f9ce0" stroke-width="1"/><path d="M6.700 5.700H12L15.300 9V15.300H6.700Z" fill="#fff" stroke="#1d4fc0" stroke-width="1.300"/><path d="M8.500 10.500H13.500M8.500 12.800H13.500" stroke="#7f9ce0" stroke-width="1"/><path d="M9.500 1.200C11.500 0.400 13.500 1.500 13.500 3.500M12.200 2.800L13.600 4.600L14.800 2.600M5.500 15C3.500 15.600 2 14.500 2 12.500M0.800 13.200L2 11.500L3.500 13.200" stroke="#e0261a" stroke-width="1.200" fill="none"/></svg>
<div class="t " style="left:28px;top:574px;font-size:10px;font-weight:bold;color:#223;letter-spacing:1.6px;line-height:17px;">..</div>
<svg class="a" style="left:48px;top:571px;" width="19" height="17" viewBox="0 0 19 17"><path d="M3 8L8 13.500L15.500 0.500" stroke="#2444b8" stroke-width="3" fill="none" stroke-linejoin="miter"/><path d="M4 8.500L7.800 12" stroke="#5f83e8" stroke-width="1.200"/><text x="1.500" y="6.500" font-family="Liberation Sans,sans-serif" font-size="5.800" font-weight="bold" fill="#000">2</text><text x="6" y="4.500" font-family="Liberation Sans,sans-serif" font-size="5.800" font-weight="bold" fill="#000">0</text><text x="0.500" y="16" font-family="Liberation Sans,sans-serif" font-size="5.800" font-weight="bold" fill="#000">1</text><text x="13.500" y="16" font-family="Liberation Sans,sans-serif" font-size="5.800" font-weight="bold" fill="#000">G</text></svg>
<div class="t " style="left:68px;top:574px;font-size:10px;font-weight:bold;color:#223;letter-spacing:1.6px;line-height:17px;">..</div>
<svg class="a" style="left:87px;top:573px;" width="16" height="16" viewBox="0 0 16 16"><path d="M2.5 2.5H5.7L6.9 12H1.3Z" fill="#7fa4e6" stroke="#111" stroke-width="1"/><path d="M3.2 4L2.8 11" stroke="#e8f1ff" stroke-width="1.2"/><rect x="2.0" y="1" width="4.2" height="2.6" fill="#111"/><rect x="1.0" y="11.4" width="6.2" height="3.6" fill="#111"/><rect x="3.3" y="12.2" width="1.8" height="1.4" fill="#fff"/><path d="M10.7 2.5H13.899999999999999L15.099999999999998 12H9.5Z" fill="#7fa4e6" stroke="#111" stroke-width="1"/><path d="M11.399999999999999 4L11.0 11" stroke="#e8f1ff" stroke-width="1.2"/><rect x="10.2" y="1" width="4.2" height="2.6" fill="#111"/><rect x="9.2" y="11.4" width="6.2" height="3.6" fill="#111"/><rect x="11.499999999999998" y="12.2" width="1.8" height="1.4" fill="#fff"/><rect x="5.7" y="4" width="5" height="3" fill="#111"/><rect x="7.0" y="4.8" width="2.4" height="1.2" fill="#ddd"/></svg>
<div class="t " style="left:106px;top:574px;font-size:10px;font-weight:bold;color:#223;letter-spacing:1.6px;line-height:17px;">..</div>
<div style="left:119px;top:573px;width:1px;height:18px;background:#a0a0a0;"></div>
<svg class="a" style="left:127px;top:572px;" width="16" height="16" viewBox="0 0 16 16"><path d="M1 9L9 2L15.5 6L8 14Z" fill="#3a8fe8" stroke="#1d5fb0" stroke-width=".7"/><path d="M1 9L8 14V15.5L1 10.5Z" fill="#1d4fa8"/><path d="M8 14L15.5 6V7.5L8 15.5Z" fill="#e8a03a"/></svg>
<div class="t " style="left:145px;top:574px;font-size:10px;font-weight:bold;color:#223;letter-spacing:1.6px;line-height:17px;">..</div>
<div style="left:158px;top:573px;width:1px;height:18px;background:#a0a0a0;"></div>
<svg class="a" style="left:166px;top:571px;" width="14" height="17" viewBox="0 0 14 17"><rect x="1" y="2.5" width="12" height="13.5" rx="1.5" fill="#fff6d8" stroke="#d89a10" stroke-width="1.6"/><rect x="4" y="0.8" width="6" height="3.4" fill="#c9d0e8" stroke="#34498a" stroke-width=".9"/><path d="M3.5 7H5M3.5 10H5M3.5 13H5" stroke="#e0261a" stroke-width="1.4"/><path d="M6.5 7H10.5M6.5 10H10.5M6.5 13H10.5" stroke="#2a55c8" stroke-width="1.2"/></svg>
<div class="t " style="left:184px;top:574px;font-size:10px;font-weight:bold;color:#223;letter-spacing:1.6px;line-height:17px;">...</div>
<div style="left:201px;top:573px;width:1px;height:18px;background:#a0a0a0;"></div>
<div style="left:219px;top:102px;width:1px;height:495px;background:#a8a8a8;"></div>
<div style="left:220px;top:102px;width:1px;height:495px;background:#5a5a5a;"></div>
<div style="left:1176px;top:102px;width:1px;height:496px;background:#a0a0a0;"></div>
<div style="left:1177px;top:102px;width:1px;height:496px;background:#5a5a5a;"></div>
<div style="left:314px;top:571px;width:858px;height:28px;background:#fff;border-right:1px solid #909090;"></div>
<div style="left:221px;top:598px;width:951px;height:1px;background:#a0a0a0;"></div>
<div style="left:1169px;top:104px;width:3px;height:470px;background:#fafafa;"></div>
<div style="left:1171px;top:102px;width:1px;height:497px;background:#909090;"></div>
<div style="left:223px;top:104px;width:946px;height:467px;background:#fff;"></div>
<div style="left:223px;top:104px;width:946px;height:2px;background:#a0a0a0;"></div>
<div style="left:225px;top:106px;width:944px;height:1px;background:#696969;"></div>
<div style="left:223px;top:104px;width:2px;height:466px;background:#a0a0a0;"></div>
<div style="left:225px;top:106px;width:1px;height:463px;background:#696969;"></div>
<div style="left:1168px;top:104px;width:1px;height:467px;background:#a0a0a0;"></div>
<div style="left:226px;top:568px;width:941px;height:1px;background:#e3e3e3;"></div>
<div style="left:1167px;top:107px;width:1px;height:462px;background:#e3e3e3;"></div>
<div style="left:223px;top:570px;width:946px;height:1px;background:#a0a0a0;"></div>
<div style="left:226px;top:107px;width:939px;height:23px;background:#f0f0f0;"></div>
<div style="left:226px;top:111px;width:95px;height:1px;background:#fff;"></div>
<div style="left:321px;top:108px;width:1px;height:22px;background:#fff;"></div>
<div style="left:321px;top:111px;width:9px;height:1px;background:#fff;"></div>
<div style="left:359px;top:108px;width:1px;height:22px;background:#fff;"></div>
<div style="left:359px;top:111px;width:5px;height:1px;background:#fff;"></div>
<div style="left:354px;top:111px;width:5px;height:1px;background:#fff;"></div>
<div style="left:392px;top:108px;width:1px;height:22px;background:#fff;"></div>
<div style="left:392px;top:111px;width:5px;height:1px;background:#fff;"></div>
<div style="left:387px;top:111px;width:5px;height:1px;background:#fff;"></div>
<div style="left:425px;top:108px;width:1px;height:22px;background:#fff;"></div>
<div style="left:425px;top:111px;width:5px;height:1px;background:#fff;"></div>
<div style="left:420px;top:111px;width:5px;height:1px;background:#fff;"></div>
<div style="left:458px;top:108px;width:1px;height:22px;background:#fff;"></div>
<div style="left:458px;top:111px;width:5px;height:1px;background:#fff;"></div>
<div style="left:453px;top:111px;width:5px;height:1px;background:#fff;"></div>
<div style="left:491px;top:108px;width:1px;height:22px;background:#fff;"></div>
<div style="left:491px;top:111px;width:5px;height:1px;background:#fff;"></div>
<div style="left:486px;top:111px;width:5px;height:1px;background:#fff;"></div>
<div style="left:524px;top:108px;width:1px;height:22px;background:#fff;"></div>
<div style="left:524px;top:111px;width:5px;height:1px;background:#fff;"></div>
<div style="left:519px;top:111px;width:5px;height:1px;background:#fff;"></div>
<div style="left:557px;top:108px;width:1px;height:22px;background:#fff;"></div>
<div style="left:557px;top:111px;width:5px;height:1px;background:#fff;"></div>
<div style="left:552px;top:111px;width:5px;height:1px;background:#fff;"></div>
<div style="left:590px;top:108px;width:1px;height:22px;background:#fff;"></div>
<div style="left:590px;top:111px;width:5px;height:1px;background:#fff;"></div>
<div style="left:585px;top:111px;width:5px;height:1px;background:#fff;"></div>
<div style="left:623px;top:108px;width:1px;height:22px;background:#fff;"></div>
<div style="left:623px;top:111px;width:5px;height:1px;background:#fff;"></div>
<div style="left:618px;top:111px;width:5px;height:1px;background:#fff;"></div>
<div style="left:656px;top:108px;width:1px;height:22px;background:#fff;"></div>
<div style="left:656px;top:111px;width:5px;height:1px;background:#fff;"></div>
<div style="left:651px;top:111px;width:5px;height:1px;background:#fff;"></div>
<div style="left:689px;top:108px;width:1px;height:22px;background:#fff;"></div>
<div style="left:689px;top:111px;width:5px;height:1px;background:#fff;"></div>
<div style="left:684px;top:111px;width:5px;height:1px;background:#fff;"></div>
<div style="left:722px;top:108px;width:1px;height:22px;background:#fff;"></div>
<div style="left:722px;top:111px;width:5px;height:1px;background:#fff;"></div>
<div style="left:717px;top:111px;width:5px;height:1px;background:#fff;"></div>
<div style="left:755px;top:108px;width:1px;height:22px;background:#fff;"></div>
<div style="left:755px;top:111px;width:5px;height:1px;background:#fff;"></div>
<div style="left:750px;top:111px;width:5px;height:1px;background:#fff;"></div>
<div style="left:788px;top:108px;width:1px;height:22px;background:#fff;"></div>
<div style="left:788px;top:111px;width:5px;height:1px;background:#fff;"></div>
<div style="left:783px;top:111px;width:5px;height:1px;background:#fff;"></div>
<div style="left:821px;top:108px;width:1px;height:22px;background:#fff;"></div>
<div style="left:821px;top:111px;width:5px;height:1px;background:#fff;"></div>
<div style="left:816px;top:111px;width:5px;height:1px;background:#fff;"></div>
<div style="left:858px;top:108px;width:1px;height:22px;background:#e0e0e0;"></div>
<div style="left:859px;top:108px;width:1px;height:22px;background:#fff;"></div>
<div style="left:854px;top:111px;width:5px;height:1px;background:#fff;"></div>
<div style="left:462px;top:108px;width:23px;height:22px;background:#e1e1e1;"></div>
<div style="left:495px;top:108px;width:23px;height:22px;background:#e1e1e1;"></div>
<div style="left:907px;top:108px;width:22px;height:22px;background:#e1e1e1;"></div>
<div style="left:226px;top:131px;width:95px;height:437px;background:#f0f0f0;"></div>
<div style="left:226px;top:548px;width:95px;height:20px;background:#e2e2e2;"></div>
<div style="left:858px;top:131px;width:1px;height:437px;background:#ececec;"></div>
<div style="left:325px;top:131px;width:527px;height:76px;background:#000;"></div>
<div style="left:325px;top:207px;width:131px;height:19px;background:#000;"></div>
<div style="left:863px;top:131px;width:176px;height:76px;background:#000;"></div>
<div style="left:863px;top:207px;width:44px;height:19px;background:#000;"></div>
<div class="m" style="left:336.4px;top:109px;">0</div>
<div class="m" style="left:369.4px;top:109px;">1</div>
<div class="m" style="left:402.4px;top:109px;">2</div>
<div class="m" style="left:435.4px;top:109px;">3</div>
<div class="m" style="left:468.4px;top:109px;color:#0000ff;">4</div>
<div class="m" style="left:501.4px;top:109px;">5</div>
<div class="m" style="left:534.4px;top:109px;">6</div>
<div class="m" style="left:567.4px;top:109px;">7</div>
<div class="m" style="left:600.4px;top:109px;">8</div>
<div class="m" style="left:633.4px;top:109px;">9</div>
<div class="m" style="left:666.4px;top:109px;"><b>A</b></div>
<div class="m" style="left:699.4px;top:109px;"><b>B</b></div>
<div class="m" style="left:732.4px;top:109px;"><b>C</b></div>
<div class="m" style="left:765.4px;top:109px;"><b>D</b></div>
<div class="m" style="left:798.4px;top:109px;"><b>E</b></div>
<div class="m" style="left:831.4px;top:109px;"><b>F</b></div>
<div class="m" style="left:864.4px;top:109px">0123<span style="color:#0000ff">4</span>56789<b>A</b><b>B</b><b>C</b><b>D</b><b>E</b><b>F</b></div>
<div class="m" style="left:227.259px;top:131px">00552490</div>
<div class="m s" style="left:331.259px;top:131px">00<b> </b><i>00</i><b> </b>00<b> </b><i>00</i><b> </b>08<b> </b><i><b>B</b>1</i><b> </b>01<b> </b><i>81</i><b> </b><b>B</b>0<b> </b><i><b>B</b>0</i><b> </b>00<b> </b><i>84</i><b> </b>00<b> </b><i>00</i><b> </b>00<b> </b><i>00</i></div>
<div class="m w" style="left:864.259px;top:131px"><b class="d">.</b><b class="d">.</b><b class="d">.</b><b class="d">.</b><b class="d">.</b><b>±</b><b class="d">.</b><b>Å</b><b class="d">.</b><b class="d">.</b><b class="d">.</b><b>Ñ</b><b class="d">.</b><b class="d">.</b><b class="d">.</b><b class="d">.</b></div>
<div class="m" style="left:227.259px;top:150px">005524<b>A</b>0</div>
<div class="m s" style="left:331.259px;top:150px"><b>F</b>5<b> </b><i>8<b>D</b></i><b> </b><b>E</b>6<b> </b><i>7<b>F</b></i><b> </b><b>B</b>0<b> </b><i><b>A</b><b>A</b></i><b> </b>01<b> </b><i>00</i><b> </b><b>F</b><b>F</b><b> </b><i>10</i><b> </b>29<b> </b><i>01</i><b> </b>18<b> </b><i>34</i><b> </b>30<b> </b><i>00</i></div>
<div class="m w" style="left:864.259px;top:150px"><b class="d">.</b><b>ç</b><b>Ê</b><b>▯</b><b class="d">.</b><b class="n">™</b><b class="d">.</b><b class="d">.</b><b class="d">.</b><b class="d">.</b><b>)</b><b class="d">.</b><b class="d">.</b>40<b class="d">.</b></div>
<div class="m" style="left:227.259px;top:169px">005524<b>B</b>0</div>
<div class="m s" style="left:331.259px;top:169px">00<b> </b><i>68</i><b> </b>04<b> </b><i>94</i><b> </b>01<b> </b><i>03</i><b> </b>72<b> </b><i>30</i><b> </b>00<b> </b><i>00</i><b> </b><b>C</b>2<b> </b><i>01</i><b> </b>18<b> </b><i><b>E</b>0</i><b> </b>01<b> </b><i>00</i></div>
<div class="m w" style="left:864.259px;top:169px"><b class="d">.</b><b>h</b><b class="d">.</b><b>î</b><b class="d">.</b><b class="d">.</b><b>r</b>0<b class="d">.</b><b class="d">.</b><b>¬</b><b class="d">.</b><b class="d">.</b><b>‡</b><b class="d">.</b><b class="d">.</b></div>
<div class="m" style="left:227.259px;top:188px">005524<b>C</b>0</div>
<div class="m s" style="left:331.259px;top:188px"><b>E</b>4<b> </b><i>01</i><b> </b>04<b> </b><i>00</i><b> </b>00<b> </b><i>02</i><b> </b>00<b> </b><i>01</i><b> </b>7<b>D</b><b> </b><i>00</i><b> </b>00<b> </b><i>00</i><b> </b>00<b> </b><i>00</i><b> </b>00<b> </b><i>00</i></div>
<div class="m w" style="left:864.259px;top:188px"><b class="n">‰</b><b class="d">.</b><b class="d">.</b><b class="d">.</b><b class="d">.</b><b class="d">.</b><b class="d">.</b><b class="d">.</b><b>}</b><b class="d">.</b><b class="d">.</b><b class="d">.</b><b class="d">.</b><b class="d">.</b><b class="d">.</b><b class="d">.</b></div>
<div class="m" style="left:227.259px;top:207px">005524<b>D</b>0</div>
<div class="m s" style="left:331.259px;top:207px"><b>D</b>4<b> </b><i>5<b>C</b></i><b> </b><b>F</b>2<b> </b><i><b>F</b><b>F</b></i></div>
<div class="m" style="left:463.259px;top:207px"><b>B</b><b>F</b><b> </b><i><b>D</b>7</i><b> </b><b>C</b>9<b> </b><i><b>B</b>1</i><b> </b>00<b> </b><i>00</i><b> </b>00<b> </b><i>01</i><b> </b>0<b>D</b><b> </b><i>07</i><b> </b><b>E</b>0<b> </b><i>07</i></div>
<div class="m w" style="left:864.259px;top:207px"><b>‘</b><b>\</b><b>Ú</b><b class="d">.</b></div>
<div class="m k" style="left:908.259px;top:207px"><b>ø</b><b class="d">.</b><b class="n">…</b><b>±</b><b class="d">.</b><b class="d">.</b><b class="d">.</b><b class="d">.</b><b class="d">.</b><b class="d">.</b><b>‡</b><b class="d">.</b></div>
<div class="m" style="left:227.259px;top:226px">005524<b>E</b>0</div>
<div class="m" style="left:331.259px;top:226px">00<b> </b><i>18</i><b> </b>4<b>E</b><b> </b><i>00</i><b> </b>00<b> </b><i>00</i><b> </b>00<b> </b><i>00</i><b> </b>00<b> </b><i>80</i><b> </b><b>E</b>1<b> </b><i>04</i><b> </b>90<b> </b><i><b>E</b><b>B</b></i><b> </b>24<b> </b><i><b>A</b>3</i></div>
<div class="m k" style="left:864.259px;top:226px"><b class="d">.</b><b class="d">.</b><b>N</b><b class="d">.</b><b class="d">.</b><b class="d">.</b><b class="d">.</b><b class="d">.</b><b class="d">.</b><b>Ä</b><b>·</b><b class="d">.</b><b>ê</b><b>Î</b><b>$</b><b>£</b></div>
<div class="m" style="left:227.259px;top:245px">005524<b>F</b>0</div>
<div class="m" style="left:331.259px;top:245px">00<b> </b><i>00</i><b> </b>00<b> </b><i>00</i><b> </b>00<b> </b><i>00</i><b> </b>00<b> </b><i>00</i><b> </b>00<b> </b><i>00</i><b> </b>00<b> </b><i>00</i><b> </b>00<b> </b><i>00</i><b> </b>00<b> </b><i>00</i></div>
<div class="m k" style="left:864.259px;top:245px"><b class="d">.</b><b class="d">.</b><b class="d">.</b><b class="d">.</b><b class="d">.</b><b class="d">.</b><b class="d">.</b><b class="d">.</b><b class="d">.</b><b class="d">.</b><b class="d">.</b><b class="d">.</b><b class="d">.</b><b class="d">.</b><b class="d">.</b><b class="d">.</b></div>
<div class="m" style="left:227.259px;top:264px">00552500</div>
<div class="m" style="left:331.259px;top:264px">00<b> </b><i>00</i><b> </b>00<b> </b><i>00</i><b> </b>00<b> </b><i>00</i><b> </b>00<b> </b><i>00</i><b> </b>00<b> </b><i>00</i><b> </b>00<b> </b><i>00</i><b> </b>00<b> </b><i>00</i><b> </b>00<b> </b><i>00</i></div>
<div class="m k" style="left:864.259px;top:264px"><b class="d">.</b><b class="d">.</b><b class="d">.</b><b class="d">.</b><b class="d">.</b><b class="d">.</b><b class="d">.</b><b class="d">.</b><b class="d">.</b><b class="d">.</b><b class="d">.</b><b class="d">.</b><b class="d">.</b><b class="d">.</b><b class="d">.</b><b class="d">.</b></div>
<div class="m" style="left:227.259px;top:283px">00552510</div>
<div class="m" style="left:331.259px;top:283px">00<b> </b><i>00</i><b> </b>00<b> </b><i>00</i><b> </b>00<b> </b><i>00</i><b> </b>00<b> </b><i>00</i><b> </b>00<b> </b><i>00</i><b> </b>00<b> </b><i>00</i><b> </b>00<b> </b><i>00</i><b> </b>00<b> </b><i>00</i></div>
<div class="m k" style="left:864.259px;top:283px"><b class="d">.</b><b class="d">.</b><b class="d">.</b><b class="d">.</b><b class="d">.</b><b class="d">.</b><b class="d">.</b><b class="d">.</b><b class="d">.</b><b class="d">.</b><b class="d">.</b><b class="d">.</b><b class="d">.</b><b class="d">.</b><b class="d">.</b><b class="d">.</b></div>
<div class="m" style="left:227.259px;top:302px">00552520</div>
<div class="m" style="left:331.259px;top:302px">00<b> </b><i>00</i><b> </b>00<b> </b><i>00</i><b> </b>00<b> </b><i>00</i><b> </b>00<b> </b><i>00</i><b> </b>00<b> </b><i>00</i><b> </b>00<b> </b><i>00</i><b> </b>00<b> </b><i>00</i><b> </b>00<b> </b><i>00</i></div>
<div class="m k" style="left:864.259px;top:302px"><b class="d">.</b><b class="d">.</b><b class="d">.</b><b class="d">.</b><b class="d">.</b><b class="d">.</b><b class="d">.</b><b class="d">.</b><b class="d">.</b><b class="d">.</b><b class="d">.</b><b class="d">.</b><b class="d">.</b><b class="d">.</b><b class="d">.</b><b class="d">.</b></div>
<div class="m" style="left:227.259px;top:321px">00552530</div>
<div class="m" style="left:331.259px;top:321px">00<b> </b><i>00</i><b> </b>00<b> </b><i>00</i><b> </b>00<b> </b><i>00</i><b> </b>00<b> </b><i>00</i><b> </b>00<b> </b><i>00</i><b> </b>00<b> </b><i>00</i><b> </b>00<b> </b><i>00</i><b> </b>00<b> </b><i>00</i></div>
<div class="m k" style="left:864.259px;top:321px"><b class="d">.</b><b class="d">.</b><b class="d">.</b><b class="d">.</b><b class="d">.</b><b class="d">.</b><b class="d">.</b><b class="d">.</b><b class="d">.</b><b class="d">.</b><b class="d">.</b><b class="d">.</b><b class="d">.</b><b class="d">.</b><b class="d">.</b><b class="d">.</b></div>
<div class="m" style="left:227.259px;top:340px">00552540</div>
<div class="m" style="left:331.259px;top:340px">00<b> </b><i>00</i><b> </b>00<b> </b><i>00</i><b> </b>00<b> </b><i>00</i><b> </b>00<b> </b><i>00</i><b> </b>00<b> </b><i>00</i><b> </b>00<b> </b><i>00</i><b> </b>00<b> </b><i>00</i><b> </b>00<b> </b><i>00</i></div>
<div class="m k" style="left:864.259px;top:340px"><b class="d">.</b><b class="d">.</b><b class="d">.</b><b class="d">.</b><b class="d">.</b><b class="d">.</b><b class="d">.</b><b class="d">.</b><b class="d">.</b><b class="d">.</b><b class="d">.</b><b class="d">.</b><b class="d">.</b><b class="d">.</b><b class="d">.</b><b class="d">.</b></div>
<div class="m" style="left:227.259px;top:359px">00552550</div>
<div class="m" style="left:331.259px;top:359px">00<b> </b><i>00</i><b> </b>00<b> </b><i>00</i><b> </b>00<b> </b><i>00</i><b> </b>00<b> </b><i>00</i><b> </b>00<b> </b><i>00</i><b> </b>00<b> </b><i>00</i><b> </b>00<b> </b><i>00</i><b> </b>00<b> </b><i>00</i></div>
<div class="m k" style="left:864.259px;top:359px"><b class="d">.</b><b class="d">.</b><b class="d">.</b><b class="d">.</b><b class="d">.</b><b class="d">.</b><b class="d">.</b><b class="d">.</b><b class="d">.</b><b class="d">.</b><b class="d">.</b><b class="d">.</b><b class="d">.</b><b class="d">.</b><b class="d">.</b><b class="d">.</b></div>
<div class="m" style="left:227.259px;top:378px">00552560</div>
<div class="m" style="left:331.259px;top:378px">00<b> </b><i>00</i><b> </b>00<b> </b><i>00</i><b> </b>00<b> </b><i>00</i><b> </b>00<b> </b><i>00</i><b> </b>00<b> </b><i>00</i><b> </b>00<b> </b><i>00</i><b> </b>00<b> </b><i>00</i><b> </b>00<b> </b><i>00</i></div>
<div class="m k" style="left:864.259px;top:378px"><b class="d">.</b><b class="d">.</b><b class="d">.</b><b class="d">.</b><b class="d">.</b><b class="d">.</b><b class="d">.</b><b class="d">.</b><b class="d">.</b><b class="d">.</b><b class="d">.</b><b class="d">.</b><b class="d">.</b><b class="d">.</b><b class="d">.</b><b class="d">.</b></div>
<div class="m" style="left:227.259px;top:397px">00552570</div>
<div class="m" style="left:331.259px;top:397px">00<b> </b><i>00</i><b> </b>00<b> </b><i>00</i><b> </b>00<b> </b><i>00</i><b> </b>00<b> </b><i>00</i><b> </b>00<b> </b><i>00</i><b> </b>00<b> </b><i>00</i><b> </b>00<b> </b><i>00</i><b> </b>00<b> </b><i>00</i></div>
<div class="m k" style="left:864.259px;top:397px"><b class="d">.</b><b class="d">.</b><b class="d">.</b><b class="d">.</b><b class="d">.</b><b class="d">.</b><b class="d">.</b><b class="d">.</b><b class="d">.</b><b class="d">.</b><b class="d">.</b><b class="d">.</b><b class="d">.</b><b class="d">.</b><b class="d">.</b><b class="d">.</b></div>
<div class="m" style="left:227.259px;top:416px">00552580</div>
<div class="m" style="left:331.259px;top:416px">00<b> </b><i>00</i><b> </b>00<b> </b><i>00</i><b> </b>00<b> </b><i>00</i><b> </b>00<b> </b><i>00</i><b> </b>00<b> </b><i>00</i><b> </b>00<b> </b><i>00</i><b> </b>00<b> </b><i>00</i><b> </b>00<b> </b><i>00</i></div>
<div class="m k" style="left:864.259px;top:416px"><b class="d">.</b><b class="d">.</b><b class="d">.</b><b class="d">.</b><b class="d">.</b><b class="d">.</b><b class="d">.</b><b class="d">.</b><b class="d">.</b><b class="d">.</b><b class="d">.</b><b class="d">.</b><b class="d">.</b><b class="d">.</b><b class="d">.</b><b class="d">.</b></div>
<div class="m" style="left:227.259px;top:435px">00552590</div>
<div class="m" style="left:331.259px;top:435px">00<b> </b><i>00</i><b> </b>00<b> </b><i>00</i><b> </b>00<b> </b><i>00</i><b> </b>00<b> </b><i>00</i><b> </b>00<b> </b><i>00</i><b> </b>00<b> </b><i>00</i><b> </b>00<b> </b><i>00</i><b> </b>00<b> </b><i>00</i></div>
<div class="m k" style="left:864.259px;top:435px"><b class="d">.</b><b class="d">.</b><b class="d">.</b><b class="d">.</b><b class="d">.</b><b class="d">.</b><b class="d">.</b><b class="d">.</b><b class="d">.</b><b class="d">.</b><b class="d">.</b><b class="d">.</b><b class="d">.</b><b class="d">.</b><b class="d">.</b><b class="d">.</b></div>
<div class="m" style="left:227.259px;top:454px">005525<b>A</b>0</div>
<div class="m" style="left:331.259px;top:454px">00<b> </b><i>00</i><b> </b>00<b> </b><i>00</i><b> </b>00<b> </b><i>00</i><b> </b>00<b> </b><i>00</i><b> </b>00<b> </b><i>00</i><b> </b>00<b> </b><i>00</i><b> </b>00<b> </b><i>00</i><b> </b>00<b> </b><i>00</i></div>
<div class="m k" style="left:864.259px;top:454px"><b class="d">.</b><b class="d">.</b><b class="d">.</b><b class="d">.</b><b class="d">.</b><b class="d">.</b><b class="d">.</b><b class="d">.</b><b class="d">.</b><b class="d">.</b><b class="d">.</b><b class="d">.</b><b class="d">.</b><b class="d">.</b><b class="d">.</b><b class="d">.</b></div>
<div class="m" style="left:227.259px;top:473px">005525<b>B</b>0</div>
<div class="m" style="left:331.259px;top:473px">00<b> </b><i>00</i><b> </b>00<b> </b><i>00</i><b> </b>00<b> </b><i>00</i><b> </b>00<b> </b><i>00</i><b> </b>00<b> </b><i>00</i><b> </b>00<b> </b><i>00</i><b> </b>00<b> </b><i>00</i><b> </b>00<b> </b><i>00</i></div>
<div class="m k" style="left:864.259px;top:473px"><b class="d">.</b><b class="d">.</b><b class="d">.</b><b class="d">.</b><b class="d">.</b><b class="d">.</b><b class="d">.</b><b class="d">.</b><b class="d">.</b><b class="d">.</b><b class="d">.</b><b class="d">.</b><b class="d">.</b><b class="d">.</b><b class="d">.</b><b class="d">.</b></div>
<div class="m" style="left:227.259px;top:492px">005525<b>C</b>0</div>
<div class="m" style="left:331.259px;top:492px">00<b> </b><i>00</i><b> </b>00<b> </b><i>00</i><b> </b>00<b> </b><i>00</i><b> </b>00<b> </b><i>00</i><b> </b>00<b> </b><i>00</i><b> </b>00<b> </b><i>00</i><b> </b>00<b> </b><i>00</i><b> </b>00<b> </b><i>00</i></div>
<div class="m k" style="left:864.259px;top:492px"><b class="d">.</b><b class="d">.</b><b class="d">.</b><b class="d">.</b><b class="d">.</b><b class="d">.</b><b class="d">.</b><b class="d">.</b><b class="d">.</b><b class="d">.</b><b class="d">.</b><b class="d">.</b><b class="d">.</b><b class="d">.</b><b class="d">.</b><b class="d">.</b></div>
<div class="m" style="left:227.259px;top:511px">005525<b>D</b>0</div>
<div class="m" style="left:331.259px;top:511px">00<b> </b><i>00</i><b> </b>00<b> </b><i>00</i><b> </b>03<b> </b><i>00</i><b> </b>00<b> </b><i>00</i><b> </b>8<b>A</b><b> </b><i>32</i><b> </b><b>F</b><b>C</b><b> </b><i>66</i><b> </b><b>F</b><b>F</b><b> </b><i><b>F</b><b>F</b></i><b> </b><b>F</b><b>F</b><b> </b><i><b>F</b><b>F</b></i></div>
<div class="m k" style="left:864.259px;top:511px"><b class="d">.</b><b class="d">.</b><b class="d">.</b><b class="d">.</b><b class="d">.</b><b class="d">.</b><b class="d">.</b><b class="d">.</b><b>ä</b>2<b>¸</b><b>f</b><b class="d">.</b><b class="d">.</b><b class="d">.</b><b class="d">.</b></div>
<div class="m" style="left:227.259px;top:530px">005525<b>E</b>0</div>
<div class="m" style="left:331.259px;top:530px"><b>F</b><b>F</b><b> </b><i><b>F</b><b>F</b></i><b> </b><b>F</b><b>F</b><b> </b><i><b>F</b><b>F</b></i><b> </b><b>F</b><b>F</b><b> </b><i><b>F</b><b>F</b></i><b> </b><b>F</b><b>F</b><b> </b><i><b>F</b><b>F</b></i><b> </b><b>F</b><b>F</b><b> </b><i><b>F</b><b>F</b></i><b> </b><b>F</b><b>F</b><b> </b><i><b>F</b><b>F</b></i><b> </b><b>F</b><b>F</b><b> </b><i><b>F</b><b>F</b></i><b> </b><b>F</b><b>F</b><b> </b><i><b>F</b><b>F</b></i></div>
<div class="m k" style="left:864.259px;top:530px"><b class="d">.</b><b class="d">.</b><b class="d">.</b><b class="d">.</b><b class="d">.</b><b class="d">.</b><b class="d">.</b><b class="d">.</b><b class="d">.</b><b class="d">.</b><b class="d">.</b><b class="d">.</b><b class="d">.</b><b class="d">.</b><b class="d">.</b><b class="d">.</b></div>
<div class="m" style="left:227.259px;top:549px">005525<b>F</b>0</div>
<div class="m" style="left:331.259px;top:549px"><b>F</b><b>F</b><b> </b><i><b>F</b><b>F</b></i><b> </b><b>F</b><b>F</b><b> </b><i><b>F</b><b>F</b></i><b> </b><b>F</b><b>F</b><b> </b><i><b>F</b><b>F</b></i><b> </b><b>F</b><b>F</b><b> </b><i><b>F</b><b>F</b></i><b> </b><b>F</b><b>F</b><b> </b><i><b>F</b><b>F</b></i><b> </b><b>F</b><b>F</b><b> </b><i><b>F</b><b>F</b></i><b> </b><b>F</b><b>F</b><b> </b><i><b>F</b><b>F</b></i><b> </b><b>F</b><b>F</b><b> </b><i><b>F</b><b>F</b></i></div>
<div class="m k" style="left:864.259px;top:549px"><b class="d">.</b><b class="d">.</b><b class="d">.</b><b class="d">.</b><b class="d">.</b><b class="d">.</b><b class="d">.</b><b class="d">.</b><b class="d">.</b><b class="d">.</b><b class="d">.</b><b class="d">.</b><b class="d">.</b><b class="d">.</b><b class="d">.</b><b class="d">.</b></div>
<div style="left:1150px;top:131px;width:16px;height:437px;background:#f0f0f0;"></div>
<div style="left:1150px;top:248px;width:15px;height:17px;background:#cdcdcd;"></div>
<svg class="a" style="left:1150px;top:131px" width="16" height="437" viewBox="0 0 16 437"><path d="M4 11.500L7.500 8L11 11.500M4 425.500L7.500 429L11 425.500" stroke="#505050" stroke-width="2" fill="none"/></svg>
<div style="left:225px;top:573px;width:89px;height:23px;background:#f0f0f0;border-right:1px solid #555;border-bottom:1px solid #555;"></div>
<div style="left:314px;top:571px;width:855px;height:2px;background:#f6f6f6;"></div>
<div style="left:313px;top:573px;width:856px;height:1px;background:#555;"></div>
<svg class="a" style="left:229px;top:578px;" width="13" height="16" viewBox="0 0 13 16"><path d="M0.5 1.5H8L12 5.5V14.5H0.5Z" fill="#fff" stroke="#2a55c8"/><path d="M8 1.5V5.5H12" fill="#dde6ff" stroke="#2a55c8" stroke-width=".8"/><path d="M2.5 4V8M5 4.5V7.5M7 4.5V7.5M5 4.5H7M5 7.5H7M2.5 10V13M4.5 10V13M2.5 10H4.5M2.5 13H4.5M7 10V13M9.5 10V13" stroke="#000" stroke-width="1.1" fill="none"/></svg>
<div class="t " style="left:246px;top:579px;font-size:12px;color:#000;letter-spacing:-0.62px;">2560x1080 ...</div>
<div style="left:1182px;top:124px;width:20px;height:106px;background:#f3f3f3;border:1px solid #7a9cc4;border-right:0;"></div>
<div style="left:1203px;top:102px;width:1px;height:497px;background:#b0b0b0;"></div>
<div style="left:1172px;top:102px;width:4px;height:496px;background:#f7f7f7;"></div>
<div class="t" style="left:1199px;top:129px;font-size:12px;color:#000;transform:rotate(90deg);transform-origin:0 0;">Data Inspector</div>
<div style="left:1204px;top:0px;width:2px;height:602px;background:#fff;"></div>
</body></html>
